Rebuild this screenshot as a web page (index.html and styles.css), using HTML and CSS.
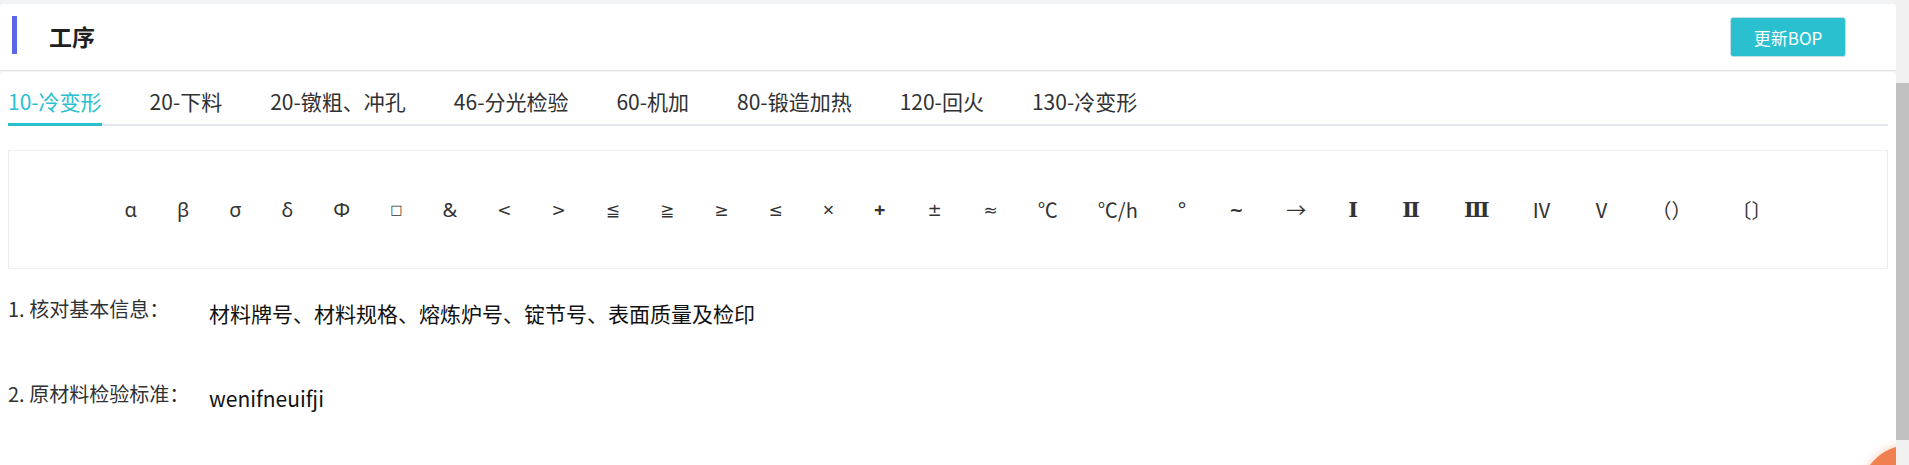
FILE: index.html
```html
<!DOCTYPE html>
<html lang="zh-CN">
<head>
<meta charset="utf-8">
<title>工序</title>
<link rel="stylesheet" href="styles.css">
</head>
<body>
<div class="page">
  <main class="main">
    <section class="header-card">
      <div class="title">
        <span class="title-bar"></span>
        <h2 class="title-text">工序</h2>
      </div>
      <button class="btn-primary" type="button">更新BOP</button>
    </section>
    <section class="content-card">
      <nav class="tabs">
        <span class="tab tab-active">10-冷变形</span>
        <span class="tab">20-下料</span>
        <span class="tab">20-镦粗、冲孔</span>
        <span class="tab">46-分光检验</span>
        <span class="tab">60-机加</span>
        <span class="tab">80-锻造加热</span>
        <span class="tab">120-回火</span>
        <span class="tab">130-冷变形</span>
      </nav>
      <div class="symbols">
        <span class="sym">α</span>
        <span class="sym">β</span>
        <span class="sym">σ</span>
        <span class="sym">δ</span>
        <span class="sym">Φ</span>
        <span class="sym sym-box">□</span>
        <span class="sym">&amp;</span>
        <span class="sym sym-math">&lt;</span>
        <span class="sym sym-math">&gt;</span>
        <span class="sym sym-math">≦</span>
        <span class="sym sym-math">≧</span>
        <span class="sym sym-math">≥</span>
        <span class="sym sym-math">≤</span>
        <span class="sym">×</span>
        <span class="sym sym-bold">+</span>
        <span class="sym sym-wide">±</span>
        <span class="sym sym-math">≈</span>
        <span class="sym sym-cjk">℃</span>
        <span class="sym sym-cjk">℃/h</span>
        <span class="sym">°</span>
        <span class="sym sym-tilde">~</span>
        <span class="sym sym-cjk">→</span>
        <span class="sym sym-roman">Ⅰ</span>
        <span class="sym sym-roman">Ⅱ</span>
        <span class="sym sym-roman">Ⅲ</span>
        <span class="sym sym-cjk">Ⅳ</span>
        <span class="sym sym-cjk">Ⅴ</span>
        <span class="sym sym-cjk">（）</span>
        <span class="sym sym-cjk">〔〕</span>
      </div>
      <div class="info-row">
        <div class="info-label">1. 核对基本信息：</div>
        <div class="info-value">材料牌号、材料规格、熔炼炉号、锭节号、表面质量及检印</div>
      </div>
      <div class="info-row info-row-second">
        <div class="info-label">2. 原材料检验标准：</div>
        <div class="info-value">wenifneuifji</div>
      </div>
    </section>
    <div class="fab"></div>
  </main>
  <div class="scrollbar"><div class="scrollbar-thumb"></div></div>
</div>
</body>
</html>
```

FILE: styles.css
```css
* {
  box-sizing: border-box;
}

html, body {
  margin: 0;
  padding: 0;
  height: 465px;
  overflow: hidden;
}

body {
  font-family: "Noto Sans CJK SC", "Microsoft YaHei", sans-serif;
  color: #303133;
  background: #f2f3f5;
}

.page {
  display: flex;
  height: 465px;
}

.main {
  position: relative;
  flex: 1 1 auto;
  overflow: hidden;
  padding-top: 4px;
  background: #f2f3f5;
}

.header-card {
  height: 67px;
  background: #ffffff;
  border-radius: 4px 4px 0 0;
  display: flex;
  align-items: center;
  justify-content: space-between;
  padding: 0 50px 0 12px;
  border-bottom: 1px solid #e2e3e6;
}

.title {
  display: flex;
  align-items: center;
  gap: 32px;
}

.title-bar {
  width: 5px;
  height: 38px;
  background: #5b66e8;
  margin-bottom: 4px;
}

.title-text {
  margin: 0;
  font-size: 23px;
  font-weight: 700;
  color: #1f1f1f;
  line-height: 30px;
  margin-bottom: 2px;
}

.btn-primary {
  width: 116px;
  height: 40px;
  background: #2ac0cf;
  border: 1px solid #bfe3e8;
  border-radius: 3px;
  color: #ffffff;
  font-family: "Noto Sans CJK SC", sans-serif;
  font-size: 17px;
  padding: 0;
}

.content-card {
  margin-top: 1px;
  background: #ffffff;
  border-radius: 4px 4px 0 0;
  height: 400px;
  padding: 0 8px;
}

.tabs {
  display: flex;
  gap: 48px;
  border-bottom: 2px solid #e4e7ed;
  padding-top: 6px;
}

.tab {
  position: relative;
  font-size: 21px;
  line-height: 46px;
  color: #303133;
  white-space: nowrap;
}

.tab-active {
  color: #29bfcf;
}

.tab-active::after {
  content: "";
  position: absolute;
  left: 0;
  right: 0;
  bottom: -2px;
  height: 3px;
  background: #29bfcf;
}

.symbols {
  margin-top: 24px;
  height: 119px;
  border: 1px solid #ebedf0;
  display: flex;
  align-items: center;
  justify-content: center;
  gap: 40px;
  font-family: "Noto Sans", "Noto Sans CJK SC", sans-serif;
  font-size: 20px;
  color: #333333;
}

.sym {
  white-space: nowrap;
  line-height: 24px;
}

.sym-cjk {
  font-family: "Noto Sans CJK SC", sans-serif;
}

.sym-wide {
  display: inline-block;
  width: 18px;
  text-align: center;
  font-family: "DejaVu Sans", sans-serif;
  font-size: 17px;
}

.sym-math {
  font-family: "DejaVu Sans", sans-serif;
  font-size: 17px;
}

.sym-tilde {
  display: inline-block;
  width: 20px;
  text-align: center;
  font-family: "DejaVu Sans", sans-serif;
  font-weight: 700;
  font-size: 17px;
}

.sym-roman {
  font-family: "DejaVu Serif", "Noto Sans CJK SC", serif;
  font-weight: 700;
  font-size: 21px;
  padding: 0 2px;
}

.sym-box {
  font-family: "DejaVu Sans", sans-serif;
  font-size: 13px;
}

.sym-bold {
  font-weight: 700;
}

.info-row {
  display: flex;
  margin-top: 28px;
}

.info-row-second {
  margin-top: 53px;
}

.info-label {
  flex: 0 0 201px;
  font-size: 20px;
  line-height: 24px;
  color: #303133;
}

.info-value {
  font-size: 21px;
  line-height: 32px;
  color: #111111;
}

.fab {
  position: absolute;
  right: -64px;
  bottom: -80px;
  width: 100px;
  height: 100px;
  border-radius: 50%;
  background: #f08050;
  box-shadow: 0 0 8px rgba(240, 128, 80, 0.45);
}

.scrollbar {
  flex: 0 0 13px;
  background: #f1f1f1;
  padding-top: 83px;
}

.scrollbar-thumb {
  height: 357px;
  background: #c1c1c1;
}
```
